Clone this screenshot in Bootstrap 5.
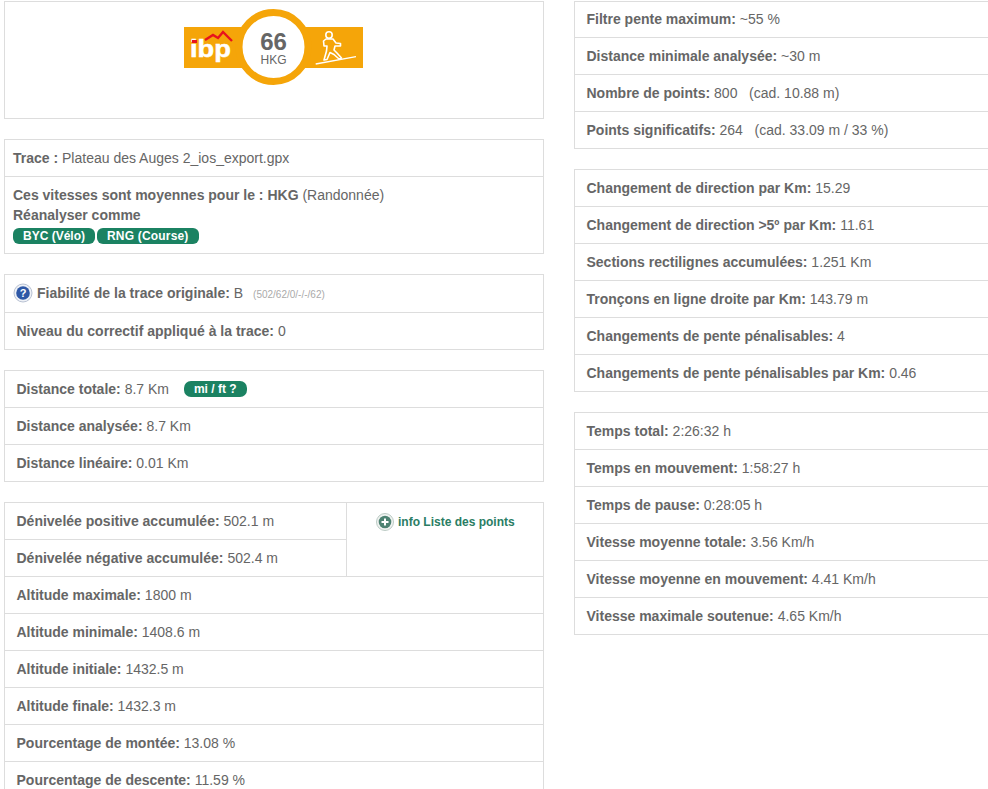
<!DOCTYPE html>
<html lang="fr">
<head>
<meta charset="utf-8">
<title>IBP</title>
<link href="https://cdn.jsdelivr.net/npm/bootstrap@5.3.0/dist/css/bootstrap.min.css" rel="stylesheet">
<style>
html,body{overflow:hidden;height:789px}
body{font-family:"Liberation Sans",Arial,sans-serif;font-size:14px;color:#666;line-height:20px;background:#fff}
.pagewrap{padding:1px 0 0 4px;gap:30px}
.leftcol{width:540px;flex:none}
.rightcol{flex:1 1 auto;min-width:0}
.stack{--bs-list-group-border-color:#ddd;--bs-list-group-border-radius:0;--bs-list-group-color:#666;--bs-list-group-item-padding-x:11.5px;--bs-list-group-item-padding-y:8px;margin-bottom:20px}
.rightcol .stack .list-group-item{border-right:0}
.rightcol .stack:first-child .list-group-item:first-child{padding-top:7px}
.stack b{color:#666}
.logobox{height:118px;text-align:center;padding:7px 0 0!important}
.logobox svg{display:block;margin:0 auto}
.tight{padding:8px!important}
.tag{background:#1b8262;color:#fff;font-size:12px;font-weight:700;line-height:16px;padding:0 10px;border-radius:6px;display:inline-block;text-decoration:none;vertical-align:top}
.tagwide{letter-spacing:.18px}
.tagrow{gap:2px;margin-top:3px;margin-bottom:1px}
.pilltag{border-radius:7px;padding:0 10px;margin-left:11px;vertical-align:1px}
.micro{font-size:10px;color:#aaa;margin-left:6px}
.infolink{color:#2a7d64;font-size:12px;font-weight:700;text-decoration:none}
.splitleft{flex:1 1 auto}
.splitleft>div{padding:8px 11.5px;height:37px;border-bottom:1px solid #ddd;box-sizing:border-box}
.splitleft>div:last-child{border-bottom:0;height:36px}
.splitright{width:197px;flex:none;border-left:1px solid #ddd;padding-top:8px;padding-left:29px}
.splitrow{padding:0!important}
.fiabrow{padding:8px 8px 7px 8px!important}
.helpicon{vertical-align:-5px;margin-right:4px}
.plusicon{vertical-align:-5px;margin-right:4px}
</style>
</head>
<body>
<div class="d-flex align-items-start pagewrap">
  <div class="leftcol">
    <div class="list-group stack">
      <div class="list-group-item logobox">
        <svg width="180" height="78" viewBox="0 0 180 78" role="img" aria-label="ibp 66 HKG">
          <rect x="0" y="18" width="179" height="41" fill="#f5a509"/>
          <circle cx="89.500" cy="38" r="34.500" fill="#fff" stroke="#f5a509" stroke-width="7"/>
          <text x="6" y="48" font-family="Liberation Sans" font-size="24" font-weight="700" fill="#fff" stroke="#fff" stroke-width="0.500" textLength="41" lengthAdjust="spacingAndGlyphs">ibp</text>
          <rect x="8" y="31" width="5" height="3" fill="#e8121d"/>
          <polyline points="21,31 29,26 34,29 39,23 48,32" fill="none" stroke="#e8121d" stroke-width="2.400"/>
          <text x="89.500" y="41" text-anchor="middle" font-family="Liberation Sans" font-size="24" font-weight="700" fill="#666">66</text>
          <text x="89.500" y="54.500" text-anchor="middle" font-family="Liberation Sans" font-size="12" fill="#666">HKG</text>
          <path d="M131.700 55 L172 47.700" stroke="#fff" stroke-width="1.300" fill="none"/>
          <g fill="none" stroke="#fff" stroke-width="1.600" stroke-linejoin="round" stroke-linecap="round">
            <circle cx="145" cy="26" r="3.200"/>
            <path d="M142 30 L149 30 L152 34 L156.500 34.500 L156.500 37 L151 37 L150 41 L153 44 L157.500 49 L155 50 L150 45.500 L146 43.500 L143 50.500 L140 51 L142.500 42 L143 37 L140 37 L139.500 32 Z"/>
          </g>
        </svg>
      </div>
    </div>
    <div class="list-group stack">
      <div class="list-group-item tight"><b>Trace :</b> Plateau des Auges 2_ios_export.gpx</div>
      <div class="list-group-item tight">
        <b>Ces vitesses sont moyennes pour le : HKG</b> (Randonnée)<br>
        <b>Réanalyser comme</b>
        <div class="d-flex tagrow"><a class="tag" href="#">BYC (Vélo)</a><a class="tag tagwide" href="#">RNG (Course)</a></div>
      </div>
    </div>
    <div class="list-group stack">
      <div class="list-group-item fiabrow">
        <svg class="helpicon" width="20" height="20" viewBox="0 0 20 20"><circle cx="10" cy="10" r="9" fill="#eef1f6" stroke="#b9c2d3"/><circle cx="10" cy="10" r="6.800" fill="#2e58a6"/><text x="10" y="14" text-anchor="middle" font-family="Liberation Sans" font-size="11" font-weight="700" fill="#fff">?</text></svg><b>Fiabilité de la trace originale:</b> B <span class="micro">(502/62/0/-/-/62)</span>
      </div>
      <div class="list-group-item"><b>Niveau du correctif appliqué à la trace:</b> 0</div>
    </div>
    <div class="list-group stack">
      <div class="list-group-item"><b>Distance totale:</b> 8.7 Km <a class="tag pilltag" href="#">mi / ft ?</a></div>
      <div class="list-group-item"><b>Distance analysée:</b> 8.7 Km</div>
      <div class="list-group-item"><b>Distance linéaire:</b> 0.01 Km</div>
    </div>
    <div class="list-group stack">
      <div class="list-group-item splitrow d-flex">
        <div class="splitleft">
          <div><b>Dénivelée positive accumulée:</b> 502.1 m</div>
          <div><b>Dénivelée négative accumulée:</b> 502.4 m</div>
        </div>
        <div class="splitright">
          <a class="infolink" href="#"><svg class="plusicon" width="18" height="18" viewBox="0 0 18 18"><circle cx="9" cy="9" r="8.500" fill="#f0f3f1" stroke="#bccbc5"/><circle cx="9" cy="9" r="6.300" fill="#4d8272"/><path d="M5.500 9H12.500M9 5.500V12.500" stroke="#fff" stroke-width="2"/></svg>info Liste des points</a>
        </div>
      </div>
      <div class="list-group-item"><b>Altitude maximale:</b> 1800 m</div>
      <div class="list-group-item"><b>Altitude minimale:</b> 1408.6 m</div>
      <div class="list-group-item"><b>Altitude initiale:</b> 1432.5 m</div>
      <div class="list-group-item"><b>Altitude finale:</b> 1432.3 m</div>
      <div class="list-group-item"><b>Pourcentage de montée:</b> 13.08 %</div>
      <div class="list-group-item"><b>Pourcentage de descente:</b> 11.59 %</div>
    </div>
  </div>
  <div class="rightcol">
    <div class="list-group stack">
      <div class="list-group-item"><b>Filtre pente maximum:</b> ~55 %</div>
      <div class="list-group-item"><b>Distance minimale analysée:</b> ~30 m</div>
      <div class="list-group-item"><b>Nombre de points:</b> 800 &nbsp; (cad. 10.88 m)</div>
      <div class="list-group-item"><b>Points significatifs:</b> 264 &nbsp; (cad. 33.09 m / 33 %)</div>
    </div>
    <div class="list-group stack">
      <div class="list-group-item"><b>Changement de direction par Km:</b> 15.29</div>
      <div class="list-group-item"><b>Changement de direction &gt;5º par Km:</b> 11.61</div>
      <div class="list-group-item"><b>Sections rectilignes accumulées:</b> 1.251 Km</div>
      <div class="list-group-item"><b>Tronçons en ligne droite par Km:</b> 143.79 m</div>
      <div class="list-group-item"><b>Changements de pente pénalisables:</b> 4</div>
      <div class="list-group-item"><b>Changements de pente pénalisables par Km:</b> 0.46</div>
    </div>
    <div class="list-group stack">
      <div class="list-group-item"><b>Temps total:</b> 2:26:32 h</div>
      <div class="list-group-item"><b>Temps en mouvement:</b> 1:58:27 h</div>
      <div class="list-group-item"><b>Temps de pause:</b> 0:28:05 h</div>
      <div class="list-group-item"><b>Vitesse moyenne totale:</b> 3.56 Km/h</div>
      <div class="list-group-item"><b>Vitesse moyenne en mouvement:</b> 4.41 Km/h</div>
      <div class="list-group-item"><b>Vitesse maximale soutenue:</b> 4.65 Km/h</div>
    </div>
  </div>
</div>
<script src="https://cdn.jsdelivr.net/npm/bootstrap@5.3.0/dist/js/bootstrap.bundle.min.js"></script>
</body>
</html>
